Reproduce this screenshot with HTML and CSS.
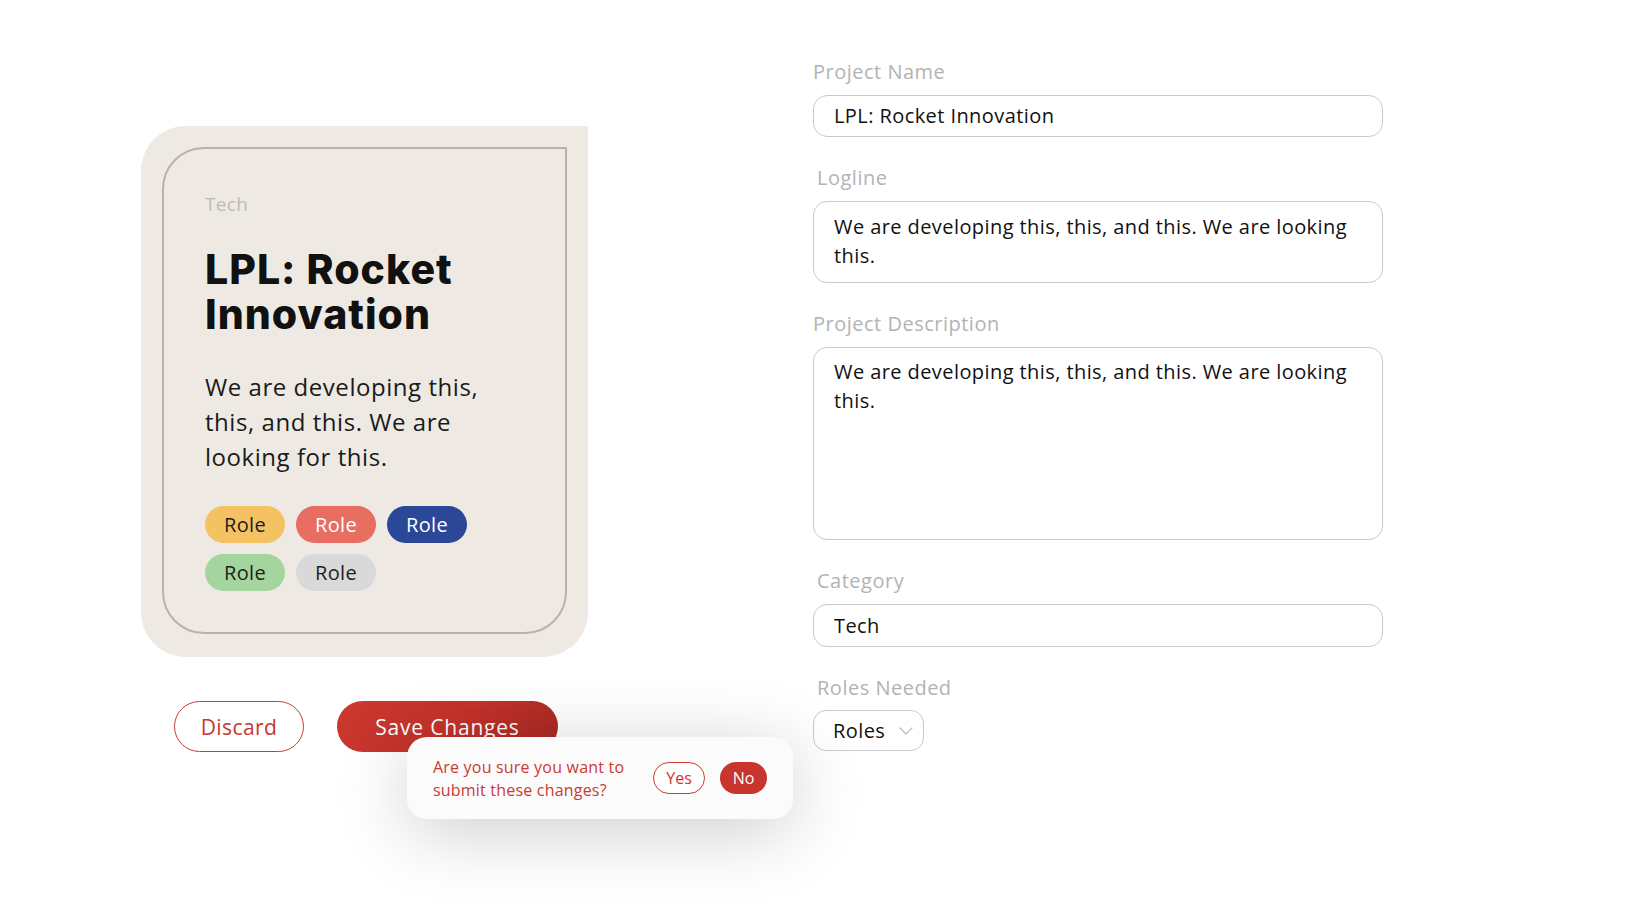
FILE: index.html
```html
<!DOCTYPE html>
<html lang="en">
<head>
<meta charset="utf-8">
<title>Edit Project</title>
<link rel="stylesheet" href="styles.css">
</head>
<body>
<div class="page">
  <section class="preview">
    <article class="card">
      <div class="card-inner">
        <div class="card-cat">Tech</div>
        <h1 class="card-title">LPL: Rocket Innovation</h1>
        <p class="card-text">We are developing this, this, and this. We are looking for this.</p>
        <div class="roles">
          <span class="role role-yellow">Role</span>
          <span class="role role-red">Role</span>
          <span class="role role-blue">Role</span>
          <span class="role role-green">Role</span>
          <span class="role role-gray">Role</span>
        </div>
      </div>
    </article>
    <div class="actions">
      <button class="btn btn-outline" type="button">Discard</button>
      <div class="save-wrap">
        <button class="btn btn-primary" type="button">Save Changes</button>
        <div class="confirm">
          <p class="confirm-text">Are you sure you want to<br>submit these changes?</p>
          <button class="pill pill-outline" type="button">Yes</button>
          <button class="pill pill-fill" type="button">No</button>
        </div>
      </div>
    </div>
  </section>

  <form class="form">
    <div class="group">
      <label class="label">Project Name</label>
      <div class="field field-single">LPL: Rocket Innovation</div>
    </div>
    <div class="group">
      <label class="label label-indent">Logline</label>
      <div class="field field-logline">We are developing this, this, and this. We are looking this.</div>
    </div>
    <div class="group">
      <label class="label">Project Description</label>
      <div class="field field-desc">We are developing this, this, and this. We are looking this.</div>
    </div>
    <div class="group">
      <label class="label label-indent">Category</label>
      <div class="field field-single field-cat">Tech</div>
    </div>
    <div class="group">
      <label class="label label-indent">Roles Needed</label>
      <div class="select">
        <span>Roles</span>
        <svg class="chev" width="14" height="8" viewBox="0 0 14 8"><path d="M1 1 L7 7 L13 1" fill="none" stroke="#bdbdbd" stroke-width="1.4" stroke-linecap="round" stroke-linejoin="round"/></svg>
      </div>
    </div>
  </form>
</div>
</body>
</html>
```

FILE: styles.css
```css
* { box-sizing: border-box; }

html, body {
  margin: 0;
  padding: 0;
  background: #ffffff;
}

body {
  font-family: "Open Sans", "Liberation Sans", sans-serif;
  color: #111111;
  width: 1628px;
  height: 918px;
  overflow: hidden;
}

.page {
  display: flex;
  align-items: flex-start;
}

/* ---------- left: preview card ---------- */
.preview {
  padding-left: 141px;
  padding-top: 126px;
  width: 588px;
  flex: none;
}

.card {
  width: 447px;
  height: 531px;
  background: #eeeae3;
  border-radius: 45px 0 45px 45px;
  padding: 21px 21px 23px 21px;
}

.card-inner {
  height: 100%;
  border: 2.5px solid #b8b3a6;
  border-radius: 42px 0 42px 42px;
  padding: 43px 20px 0 41px;
}

.card-cat {
  font-size: 19px;
  line-height: 24px;
  letter-spacing: 0.3px;
  color: #bdbab4;
}

.card-title {
  margin: 31px 0 0 0;
  font-family: "Inter", "Open Sans", sans-serif;
  font-weight: 800;
  font-size: 41px;
  line-height: 44.5px;
  letter-spacing: 1px;
  color: #111111;
}

.card-text {
  margin: 33px 0 0 0;
  width: 310px;
  font-size: 24px;
  line-height: 35px;
  letter-spacing: 0.55px;
  color: #1a1a1a;
}

.roles {
  margin-top: 32px;
  display: flex;
  flex-wrap: wrap;
  gap: 11px 11px;
  width: 270px;
}

.role {
  width: 80px;
  height: 37px;
  border-radius: 19px;
  display: flex;
  align-items: center;
  justify-content: center;
  font-size: 20px;
  letter-spacing: 0.3px;
  color: #1d1d1d;
}

.role-yellow { background: #f4c262; }
.role-red { background: #e86e62; color: #ffffff; }
.role-blue { background: #2b4797; color: #ffffff; }
.role-green { background: #a4d59e; }
.role-gray { background: #d9d9d9; }

/* ---------- actions ---------- */
.actions {
  margin-top: 44px;
  padding-left: 33px;
  display: flex;
  gap: 33px;
}

.btn {
  font-family: inherit;
  height: 51px;
  border-radius: 26px;
  font-size: 21px;
  padding: 0;
  cursor: pointer;
}

.btn-outline {
  width: 130px;
  background: #ffffff;
  border: 1.5px solid #cc3a33;
  color: #c9362f;
  letter-spacing: 0.4px;
}

.btn-primary {
  width: 221px;
  border: none;
  background: linear-gradient(135deg, #cc382f 0%, #c3322b 55%, #a92823 100%);
  color: #ffffff;
  letter-spacing: 0.8px;
}

.save-wrap {
  position: relative;
}

.confirm {
  position: absolute;
  left: 70px;
  top: 36px;
  width: 386px;
  height: 82px;
  background: #fbfbfb;
  border-radius: 20px;
  box-shadow: 0 12px 75px rgba(0, 0, 0, 0.2);
  display: flex;
  align-items: center;
  padding: 0 26px;
}

.confirm-text {
  margin: 2px 0 0 0;
  font-size: 16px;
  line-height: 23px;
  letter-spacing: 0.2px;
  color: #c93a33;
  flex: 1;
}

.pill {
  font-family: inherit;
  height: 32px;
  border-radius: 16px;
  font-size: 16px;
  padding: 0;
  cursor: pointer;
}

.pill-outline {
  width: 52px;
  background: #ffffff;
  border: 1.3px solid #cc3a33;
  color: #c9362f;
  margin-right: 15px;
}

.pill-fill {
  width: 47px;
  border: none;
  background: #c9352e;
  color: #ffffff;
}

/* ---------- right: form ---------- */
.form {
  margin: 0 0 0 225px;
  padding-top: 57px;
  width: 570px;
  flex: none;
}

.group + .group {
  margin-top: 26px;
}

.label {
  display: block;
  font-size: 20px;
  line-height: 30px;
  letter-spacing: 0.5px;
  color: #b3b3b3;
  margin-bottom: 8px;
}

.label-indent {
  padding-left: 4px;
}

.field {
  width: 570px;
  border: 1px solid #c9c9c9;
  border-radius: 14px;
  background: #ffffff;
  font-size: 20px;
  letter-spacing: 0.42px;
  color: #111111;
  padding: 0 20px;
}

.field-single {
  height: 42px;
  line-height: 40px;
}

.field-cat {
  height: 43px;
  line-height: 41px;
}

.field-logline {
  height: 82px;
  line-height: 29px;
  padding-top: 10px;
}

.field-desc {
  height: 193px;
  line-height: 29px;
  padding-top: 9px;
}

.select {
  width: 111px;
  height: 41px;
  margin-top: -1px;
  border: 1px solid #c9c9c9;
  border-radius: 13px;
  background: #ffffff;
  display: flex;
  align-items: center;
  padding-left: 19px;
  font-size: 20px;
  letter-spacing: 0.42px;
  color: #111111;
}

.chev {
  margin-left: 14px;
}
```
